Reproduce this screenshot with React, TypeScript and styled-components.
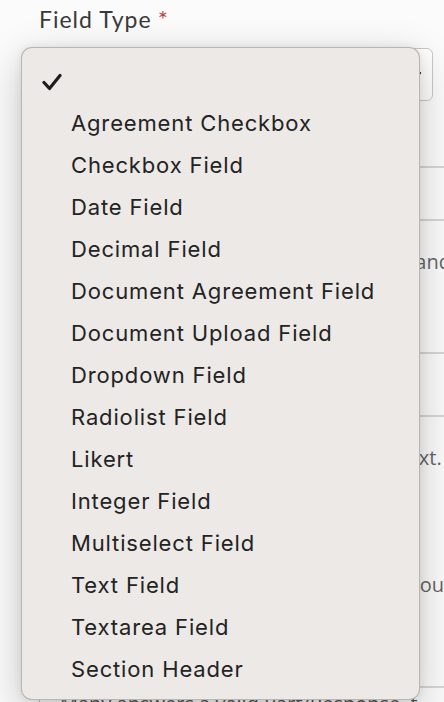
import React from 'react'
import styled, { createGlobalStyle } from 'styled-components'

const GlobalStyle = createGlobalStyle`
  html, body {
    margin: 0;
    padding: 0;
    background: #fbfbfb;
    overflow: hidden;
  }
  body {
    font-family: "Lato", "Open Sans", sans-serif;
  }
`

const Page = styled.div`
  position: relative;
  width: 444px;
  height: 702px;
  overflow: hidden;
  background: #fbfbfb;
`

const Form = styled.div`
  padding: 4px 0 0 39px;
  display: flex;
  flex-direction: column;
`

const Label = styled.label`
  font-family: "Lato", sans-serif;
  font-size: 23px;
  color: #3a3a3a;
  line-height: 30px;
  letter-spacing: 1px;
`

const Required = styled.span`
  color: #c8423a;
  margin-left: 6px;
  font-size: 24px;
`

const Select = styled.div`
  margin-top: 14px;
  width: 394px;
  height: 53px;
  box-sizing: border-box;
  border: 1px solid #c9c9c9;
  border-radius: 6px;
  background: #fff;
  display: flex;
  align-items: center;
  justify-content: flex-end;
  padding-right: 10px;
`

const Section = styled.div<{ h: number }>`
  width: 412px;
  height: ${p => p.h}px;
  border-bottom: 2px solid #d6d6d6;
  box-sizing: border-box;
  display: flex;
  flex-direction: column;
  gap: 100px;
  padding-top: ${p => (p.h > 100 ? 27 : 12)}px;
`

const RowText = styled.div<{ right: number }>`
  font-family: "Open Sans", sans-serif;
  font-size: 20px;
  color: #666;
  white-space: nowrap;
  text-align: right;
  overflow: hidden;
  padding-right: ${p => p.right}px;
`

const Footer = styled.div`
  font-family: "Open Sans", sans-serif;
  font-size: 20px;
  color: #555;
  white-space: nowrap;
  padding: 2px 0 0 20px;
  border-left: 1px solid #bbb;
`

const Menu = styled.div`
  position: absolute;
  left: 21px;
  top: 47px;
  width: 399px;
  height: 653px;
  box-sizing: border-box;
  background: #ece9e6;
  border: 1px solid rgba(0, 0, 0, 0.22);
  border-radius: 11px;
  box-shadow: 0 12px 40px rgba(0, 0, 0, 0.22), 0 0 8px rgba(0, 0, 0, 0.08);
  padding: 12px 0 9px;
  display: flex;
  flex-direction: column;
`

const Item = styled.div`
  height: 42px;
  flex-shrink: 0;
  display: flex;
  align-items: center;
  font-family: "Inter", sans-serif;
  font-size: 22px;
  letter-spacing: 0.85px;
  color: #232323;
  white-space: nowrap;
`

const CheckCol = styled.div`
  width: 49px;
  flex-shrink: 0;
  display: flex;
  justify-content: flex-end;
  padding-right: 9px;
  padding-top: 2px;
  box-sizing: border-box;
`

const options = [
  'Agreement Checkbox',
  'Checkbox Field',
  'Date Field',
  'Decimal Field',
  'Document Agreement Field',
  'Document Upload Field',
  'Dropdown Field',
  'Radiolist Field',
  'Likert',
  'Integer Field',
  'Multiselect Field',
  'Text Field',
  'Textarea Field',
  'Section Header',
]

const Check = () => (
  <svg width="20" height="18" viewBox="0 0 20 18">
    <path d="M2 9.5 L7.5 15.5 L18 2.5" fill="none" stroke="#1e1e1e" strokeWidth="3.2" strokeLinecap="round" strokeLinejoin="round" />
  </svg>
)

const Chevron = () => (
  <svg width="14" height="14" viewBox="0 0 14 14">
    <path d="M2 5 L7 10 L12 5" fill="none" stroke="#333" strokeWidth="2.4" strokeLinecap="round" strokeLinejoin="round" />
  </svg>
)

const App = () => {
  return (
    <Page>
      <GlobalStyle />
      <Form>
        <Label>
          Field Type<Required>*</Required>
        </Label>
        <Select>
          <Chevron />
        </Select>
        <Section h={67} />
        <Section h={53} />
        <Section h={133}>
          <RowText right={0}>Select the field type for this question and</RowText>
        </Section>
        <Section h={63} />
        <Section h={271}>
          <RowText right={10}>Enter the helper text shown under the text.</RowText>
          <RowText right={7}>Responses will be visible only to you</RowText>
        </Section>
        <Footer>Many answers a valid Part/Response, t</Footer>
      </Form>
      <Menu>
        <Item>
          <CheckCol>
            <Check />
          </CheckCol>
        </Item>
        {options.map(o => (
          <Item key={o}>
            <CheckCol />
            {o}
          </Item>
        ))}
      </Menu>
    </Page>
  )
}

export default App
